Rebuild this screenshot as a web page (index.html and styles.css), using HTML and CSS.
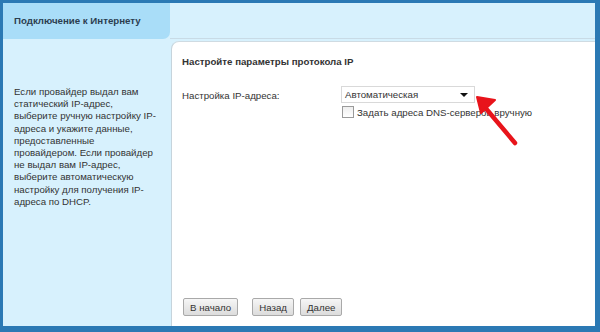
FILE: index.html
```html
<!doctype html>
<html>
<head>
<meta charset="utf-8">
<title>Подключение к Интернету</title>
    <link rel="stylesheet" href="styles.css">
</head>

<body>
    <div class="frame">
        <!-- шапка -->
        <div class="head">
            <div class="tab">Подключение к Интернету</div>
            <div class="headRest"></div>
        </div>

        <div class="main">
            <!-- подсказка слева -->
            <div class="side">
                <p>Если провайдер выдал вам<br>статический IP-адрес,<br>выберите ручную настройку IP-<br>адреса и укажите данные,<br>предоставленные<br>провайдером. Если провайдер<br>не выдал вам IP-адрес,<br>выберите автоматическую<br>настройку для получения IP-<br>адреса по DHCP.</p>
            </div>

            <div class="panel">
                <h3>Настройте параметры протокола IP</h3>
                <div class="row">
                    <label class="lbl">Настройка IP-адреса:</label>
                    <div class="fields">
                        <div class="select">Автоматическая<span class="caret"></span></div>
                        <label class="check"><span class="box"></span>Задать адреса DNS-серверов вручную</label>
                    </div>
                </div>

                <div class="btnBox">
                    <input type="button" value="В начало">
                    <input type="button" value="Назад" class="gap">
                    <input type="button" value="Далее">
                </div>

                <!-- стрелка -->
                <svg class="arrow" width="50" height="60" viewBox="0 0 50 60">
                    <path d="M42 52 L10 14" stroke="#e8141b" stroke-width="4.5" stroke-linecap="round" fill="none"/>
                    <path d="M4 6 L22 9 L8 22 Z" fill="#e8141b" stroke="#e8141b" stroke-width="2" stroke-linejoin="round"/>
                </svg>
            </div>
        </div>
    </div>
</body>
</html>
```

FILE: styles.css
```css
html,body{
    margin: 0;
    height: 100%;
}
body{
    font-family: "Liberation Sans", Arial, sans-serif;
    font-size: 9.7px;
    color: #333;
    background: #2b79b4;
}

.frame{
    height: 332px;
    box-sizing: border-box;
    border-top: 3px solid #2b79b4;
    border-left: 3px solid #2b79b4;
    border-right: 5px solid #2b79b4;
    border-bottom: 6px solid #2b79b4;
    background: #d7f1fd;
    display: flex;
    flex-direction: column;
}

/* шапка */
.head{
    display: flex;
    height: 36px;
}
.tab{
    width: 167px;
    background: #a9ddf8;
    border-bottom-right-radius: 7px;
    font-weight: bold;
    color: #2c3e50;
    padding-left: 11px;
    line-height: 36px;
    box-sizing: border-box;
}
.headRest{
    flex: 1;
    border-bottom: 1px solid #c8dbe6;
}

.main{
    flex: 1;
    display: flex;
}
.side{
    width: 168px;
    box-sizing: border-box;
    padding: 47px 8px 0 11px;
}
.side p{
    margin: 0;
    line-height: 12.2px;
}

.panel{
    position: relative;
    flex: 1;
    background: #fff;
    border-left: 1px solid #c6d4dc;
    border-top: 1px solid #cfdbe2;
    border-top-left-radius: 8px;
    margin-top: 2px;
    padding: 14px 10px 0 10px;
    display: flex;
    flex-direction: column;
}
h3{
    margin: 0;
    font-size: 9.7px;
    color: #333;
}

.row{
    display: flex;
    margin-top: 19px;
}
.lbl{
    width: 159px;
    padding-top: 4px;
}
.fields{
    display: flex;
    flex-direction: column;
}
.select{
    width: 134px;
    height: 17px;
    box-sizing: border-box;
    border: 1px solid #d9d9d9;
    line-height: 15px;
    padding-left: 3px;
    position: relative;
    color: #333;
}
.caret{
    position: absolute;
    right: 6px;
    top: 6px;
    border-left: 4px solid transparent;
    border-right: 4px solid transparent;
    border-top: 4px solid #111;
}
.check{
    display: flex;
    align-items: center;
    margin-top: 3px;
    margin-left: 1px;
}
.box{
    width: 10px;
    height: 10px;
    border: 1px solid #9a9a9a;
    background: linear-gradient(#eee, #fff);
    margin-right: 3px;
}

.btnBox{
    margin-top: auto;
    margin-bottom: 10px;
    display: flex;
}
.btnBox input{
    font-family: "Liberation Sans", Arial, sans-serif;
    font-size: 9.7px;
    color: #333;
    height: 18px;
    padding: 0 6px;
    border: 1px solid #a9a9a9;
    border-radius: 2px;
    background: linear-gradient(#f6f6f6, #dcdcdc);
    margin-right: 6px;
}
.btnBox input:first-child{
    margin-left: 1px;
}
.btnBox .gap{
    margin-left: 8px;
}

.arrow{
    position: absolute;
    left: 301px;
    top: 49px;
}
```
